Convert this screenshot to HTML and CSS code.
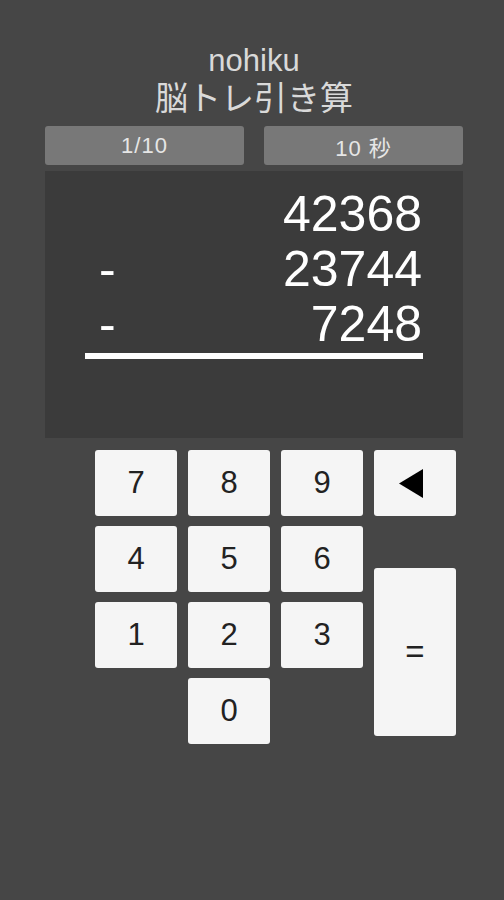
FILE: index.html
```html
<!DOCTYPE html>
<html lang="ja">
<head>
<meta charset="utf-8">
<title>nohiku</title>
<link rel="stylesheet" href="styles.css">
</head>
<body>
<div class="app">
  <header class="header">
    <div class="title-en">nohiku</div>
    <div class="title-jp">脳トレ引き算</div>
  </header>
  <div class="status">
    <div class="status-box">1/10</div>
    <div class="status-box">10 秒</div>
  </div>
  <div class="panel">
    <div class="sum">
      <div class="row"><span class="op"></span><span class="num">42368</span></div>
      <div class="row"><span class="op">-</span><span class="num">23744</span></div>
      <div class="row"><span class="op">-</span><span class="num">7248</span></div>
      <div class="rule"></div>
    </div>
  </div>
  <div class="keypad">
    <button class="key">7</button>
    <button class="key">8</button>
    <button class="key">9</button>
    <button class="key key-back"><svg width="24" height="29" viewBox="0 0 24 29"><polygon points="24,0 24,29 0,14.5" fill="#000"/></svg></button>
    <button class="key">4</button>
    <button class="key">5</button>
    <button class="key">6</button>
    <button class="key key-eq">=</button>
    <button class="key">1</button>
    <button class="key">2</button>
    <button class="key">3</button>
    <button class="key key-zero">0</button>
  </div>
</div>
</body>
</html>
```
FILE: styles.css
```css
html, body {
  margin: 0;
  padding: 0;
  background: #464646;
}
body {
  font-family: "Liberation Sans", "Noto Sans CJK JP", sans-serif;
  width: 504px;
  height: 900px;
  overflow: hidden;
}
.app {
  display: flex;
  flex-direction: column;
  align-items: flex-start;
  padding-left: 45px;
}
.header {
  width: 418px;
  margin-top: 46px;
  text-align: center;
  color: #d9d9d9;
}
.title-en {
  font-size: 31px;
  line-height: 30px;
}
.title-jp {
  font-family: "Noto Sans CJK JP", sans-serif;
  font-size: 33px;
  line-height: 36px;
  margin-top: 2px;
  margin-bottom: 2px;
}
.status {
  margin-top: 10px;
  display: flex;
  gap: 20px;
  width: 418px;
}
.status-box {
  flex: 1;
  height: 39px;
  background: #787878;
  border-radius: 3px;
  color: #e6e6e6;
  font-size: 22px;
  letter-spacing: 1px;
  display: flex;
  align-items: center;
  justify-content: center;
}
.panel {
  margin-top: 6px;
  width: 418px;
  height: 267px;
  background: #3b3b3b;
  box-sizing: border-box;
  padding: 16px 40px 0 40px;
}
.sum {
  width: 338px;
  color: #ffffff;
}
.row {
  display: flex;
  justify-content: space-between;
  font-size: 50px;
  line-height: 55px;
}
.op {
  padding-left: 14px;
}
.num {
  padding-right: 1px;
}
.rule {
  margin-top: 1px;
  height: 6px;
  background: #ffffff;
}
.keypad {
  margin-top: 12px;
  margin-left: 50px;
  display: grid;
  grid-template-columns: repeat(4, 82px);
  grid-template-rows: repeat(4, 66px);
  column-gap: 11px;
  row-gap: 10px;
}
.key {
  border: none;
  background: #f5f5f5;
  border-radius: 3px;
  font-family: "Liberation Sans", sans-serif;
  font-size: 31px;
  color: #222222;
  padding: 0;
  display: flex;
  align-items: center;
  justify-content: center;
}
.key-back {
  padding-right: 8px;
}
.key-eq {
  grid-column: 4;
  grid-row: 2 / 5;
  margin-top: 42px;
  margin-bottom: 8px;
  font-size: 33px;
}
.key-zero {
  grid-column: 2;
  grid-row: 4;
}
```
